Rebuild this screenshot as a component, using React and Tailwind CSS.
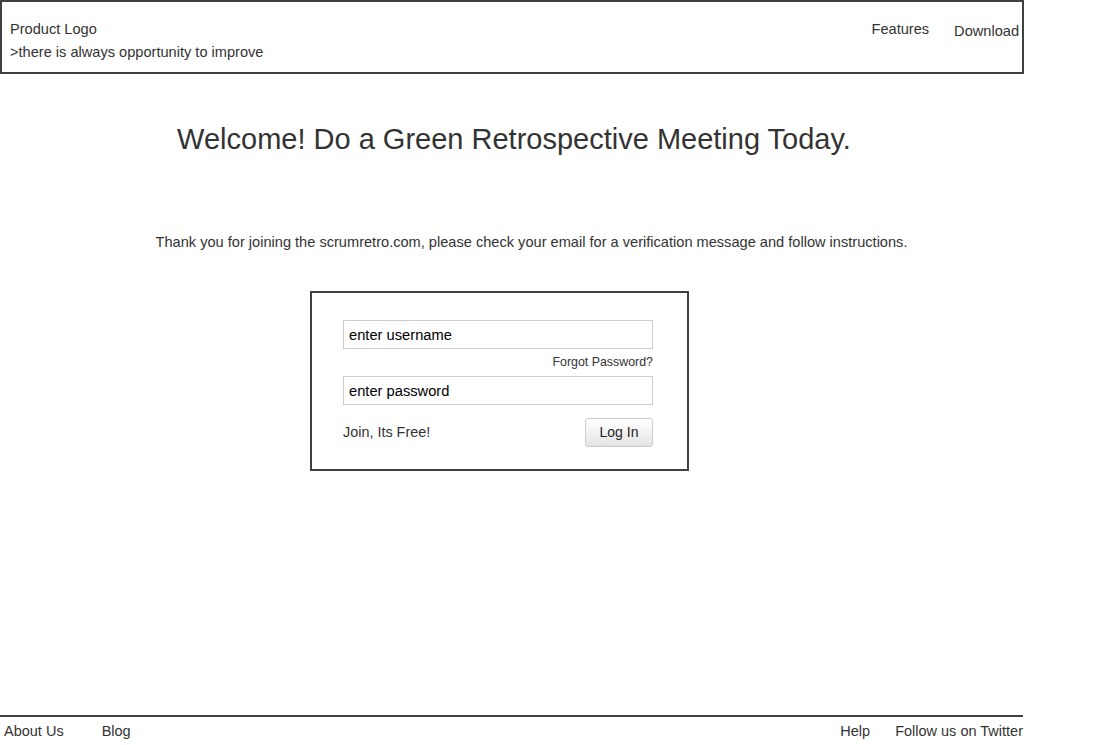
export default function App() {
  return (
    <div className="w-[1024px] h-screen flex flex-col bg-white text-[#333] font-['Liberation_Sans',Arial,sans-serif]">
      <header className="h-[74px] border-2 border-[#404040] flex justify-between pl-2 pr-[3px]">
        <div className="pt-[18px] flex flex-col gap-[5px]">
          <span className="text-[14.6px] leading-[18px]">Product Logo</span>
          <span className="text-[14.6px] leading-[18px]">&gt;there is always opportunity to improve</span>
        </div>
        <nav className="flex gap-[25px] pt-[18px] text-[14.6px] leading-[18px]">
          <a className="text-[#333]">Features</a>
          <a className="text-[#333] mt-[2px]">Download</a>
        </nav>
      </header>

      <main className="flex-1 flex flex-col">
        <h1 className="mt-[48px] pl-[4px] text-center text-[29px] leading-[35px]">
          Welcome! Do a Green Retrospective Meeting Today.
        </h1>
        <p className="mt-[77px] pl-[39px] text-center text-[14.6px] leading-[17px]">
          Thank you for joining the scrumretro.com, please check your email for a verification message and follow instructions.
        </p>

        <div className="mt-[40px] ml-[310px] w-[379px] h-[180px] border-2 border-[#404040] pt-[27px] px-[31px]">
          <input
            readOnly
            value="enter username"
            className="w-[310px] h-[29px] border border-[#cccccc] px-[5px] text-[14.7px] text-black outline-none"
          />
          <div className="h-[27px] w-[310px] flex items-center justify-end text-[12.4px] text-[#333]">
            Forgot Password?
          </div>
          <input
            readOnly
            value="enter password"
            className="w-[310px] h-[29px] border border-[#cccccc] px-[5px] text-[14.7px] text-black outline-none"
          />
          <div className="mt-[13px] flex items-center justify-between w-[310px]">
            <span className="text-[14.4px]">Join, Its Free!</span>
            <button className="w-[68px] h-[29px] rounded-[3px] border border-[#cccccc] bg-gradient-to-b from-white to-[#e4e4e4] text-[14px] text-[#222]">
              Log In
            </button>
          </div>
        </div>
      </main>

      <footer className="h-[30px] w-[1023px] border-t-2 border-[#404040] flex justify-between pl-[4px] text-[14.5px] leading-[18px]">
        <div className="flex gap-[38px] pt-[5px]">
          <span>About Us</span>
          <span>Blog</span>
        </div>
        <div className="flex gap-[25px] pt-[5px]">
          <span>Help</span>
          <span>Follow us on Twitter</span>
        </div>
      </footer>
    </div>
  );
}
